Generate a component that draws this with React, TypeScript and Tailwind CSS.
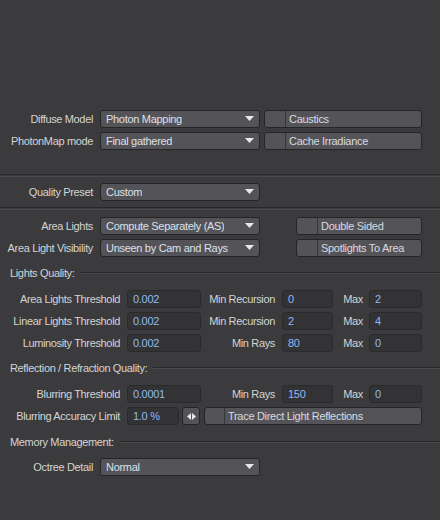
import React from 'react';

const font = { fontFamily: '"Liberation Sans", Arial, sans-serif' };

function Label({ text, w }: { text: string; w: string }) {
  return (
    <div className={`${w} shrink-0 text-right text-[11px] tracking-[-0.35px] text-[#d4d4d4] leading-none whitespace-nowrap`}>
      {text}
    </div>
  );
}

function Dropdown({ value, w = 'w-[160px]' }: { value: string; w?: string }) {
  return (
    <div
      className={`${w} h-[18px] shrink-0 flex items-center justify-between rounded-[3px] border border-[#252527] bg-[#545458] pl-[5px] pr-[5px]`}
    >
      <span className="text-[11px] tracking-[-0.3px] text-[#dde0ea] leading-none whitespace-nowrap overflow-hidden">
        {value}
      </span>
      <svg width="9" height="6" viewBox="0 0 9 6" className="shrink-0">
        <polygon points="0,0 9,0 4.5,5" fill="#e8e8e8" />
      </svg>
    </div>
  );
}

function ToggleButton({ text, w, box = 'w-[21px]' }: { text: string; w: string; box?: string }) {
  return (
    <div
      className={`${w} h-[18px] shrink-0 flex rounded-[3px] border border-[#252527] bg-[#545458] overflow-hidden`}
    >
      <div className={`${box} shrink-0 border-r border-[#353537]`} />
      <div className="flex items-center pl-[3px] text-[11px] tracking-[-0.3px] text-[#d8dae0] leading-none whitespace-nowrap">
        {text}
      </div>
    </div>
  );
}

function Field({ value, w }: { value: string; w: string }) {
  return (
    <div
      className={`${w} h-[18px] shrink-0 flex items-center rounded-[3px] border border-[#2a2a2c] bg-[#333335] pl-[5px]`}
    >
      <span className="text-[11px] tracking-[-0.3px] text-[#8fbaf2] leading-none">{value}</span>
    </div>
  );
}

function Separator({ mt }: { mt: string }) {
  return <div className={`${mt} h-[3px] border-t border-[#28282a] border-b border-b-[#4a4a4c]`} />;
}

function Header({ text, mt }: { text: string; mt: string }) {
  return (
    <div className={`${mt} h-[14px] flex items-center pl-[10px]`}>
      <span className="text-[11px] tracking-[-0.35px] text-[#d4d4d4] leading-none whitespace-nowrap">{text}</span>
      <div className="ml-[6px] flex-1 h-[2px] border-t border-[#28282a] border-b border-b-[#4a4a4c]" />
    </div>
  );
}

function QualityRow({
  label,
  value,
  midLabel,
  midValue,
  maxValue,
  mt = '',
}: {
  label: string;
  value: string;
  midLabel: string;
  midValue: string;
  maxValue: string;
  mt?: string;
}) {
  return (
    <div className={`${mt} h-[18px] flex items-center`}>
      <Label text={label} w="w-[120px]" />
      <div className="ml-[7px]">
        <Field value={value} w="w-[74px]" />
      </div>
      <Label text={midLabel} w="w-[74px]" />
      <div className="ml-[7px]">
        <Field value={midValue} w="w-[51px]" />
      </div>
      <Label text="Max" w="w-[30px]" />
      <div className="ml-[6px]">
        <Field value={maxValue} w="w-[53px]" />
      </div>
    </div>
  );
}

export default function App() {
  return (
    <div className="w-[440px] h-[520px] bg-[#3b3b3d] pt-[110px] overflow-hidden" style={font}>
      {/* Diffuse / Photon map */}
      <div className="h-[18px] flex items-center">
        <Label text="Diffuse Model" w="w-[93px]" />
        <div className="ml-[7px]">
          <Dropdown value="Photon Mapping" />
        </div>
        <div className="ml-[4px]">
          <ToggleButton text="Caustics" w="w-[158px]" />
        </div>
      </div>
      <div className="mt-[4px] h-[18px] flex items-center">
        <Label text="PhotonMap mode" w="w-[93px]" />
        <div className="ml-[7px]">
          <Dropdown value="Final gathered" />
        </div>
        <div className="ml-[4px]">
          <ToggleButton text="Cache Irradiance" w="w-[158px]" />
        </div>
      </div>

      <Separator mt="mt-[24px]" />

      <div className="mt-[6px] h-[18px] flex items-center">
        <Label text="Quality Preset" w="w-[93px]" />
        <div className="ml-[7px]">
          <Dropdown value="Custom" />
        </div>
      </div>

      <Separator mt="mt-[6px]" />

      {/* Area lights */}
      <div className="mt-[7px] h-[18px] flex items-center">
        <Label text="Area Lights" w="w-[93px]" />
        <div className="ml-[7px]">
          <Dropdown value="Compute Separately (AS)" />
        </div>
        <div className="ml-[36px]">
          <ToggleButton text="Double Sided" w="w-[126px]" />
        </div>
      </div>
      <div className="mt-[4px] h-[18px] flex items-center">
        <Label text="Area Light Visibility" w="w-[93px]" />
        <div className="ml-[7px]">
          <Dropdown value="Unseen by Cam and Rays" />
        </div>
        <div className="ml-[36px]">
          <ToggleButton text="Spotlights To Area" w="w-[126px]" />
        </div>
      </div>

      <Header text="Lights Quality:" mt="mt-[9px]" />

      <QualityRow
        mt="mt-[10px]"
        label="Area Lights Threshold"
        value="0.002"
        midLabel="Min Recursion"
        midValue="0"
        maxValue="2"
      />
      <QualityRow
        mt="mt-[4px]"
        label="Linear Lights Threshold"
        value="0.002"
        midLabel="Min Recursion"
        midValue="2"
        maxValue="4"
      />
      <QualityRow
        mt="mt-[4px]"
        label="Luminosity Threshold"
        value="0.002"
        midLabel="Min Rays"
        midValue="80"
        maxValue="0"
      />

      <Header text="Reflection / Refraction Quality:" mt="mt-[9px]" />

      <QualityRow
        mt="mt-[10px]"
        label="Blurring Threshold"
        value="0.0001"
        midLabel="Min Rays"
        midValue="150"
        maxValue="0"
      />
      <div className="mt-[4px] h-[18px] flex items-center">
        <Label text="Blurring Accuracy Limit" w="w-[120px]" />
        <div className="ml-[7px]">
          <Field value="1.0 %" w="w-[52px]" />
        </div>
        <div className="ml-[3px] w-[18px] h-[18px] flex items-center justify-center gap-[1px] rounded-[3px] border border-[#252527] bg-[#545458]">
          <svg width="4" height="7" viewBox="0 0 4 7">
            <polygon points="4,0 4,7 0,3.5" fill="#e8e8e8" />
          </svg>
          <svg width="4" height="7" viewBox="0 0 4 7">
            <polygon points="0,0 0,7 4,3.5" fill="#e8e8e8" />
          </svg>
        </div>
        <div className="ml-[4px]">
          <ToggleButton text="Trace Direct Light Reflections" w="w-[218px]" box="w-[20px]" />
        </div>
      </div>

      <Header text="Memory Management:" mt="mt-[10px]" />

      <div className="mt-[9px] h-[18px] flex items-center">
        <Label text="Octree Detail" w="w-[93px]" />
        <div className="ml-[7px]">
          <Dropdown value="Normal" />
        </div>
      </div>
    </div>
  );
}
